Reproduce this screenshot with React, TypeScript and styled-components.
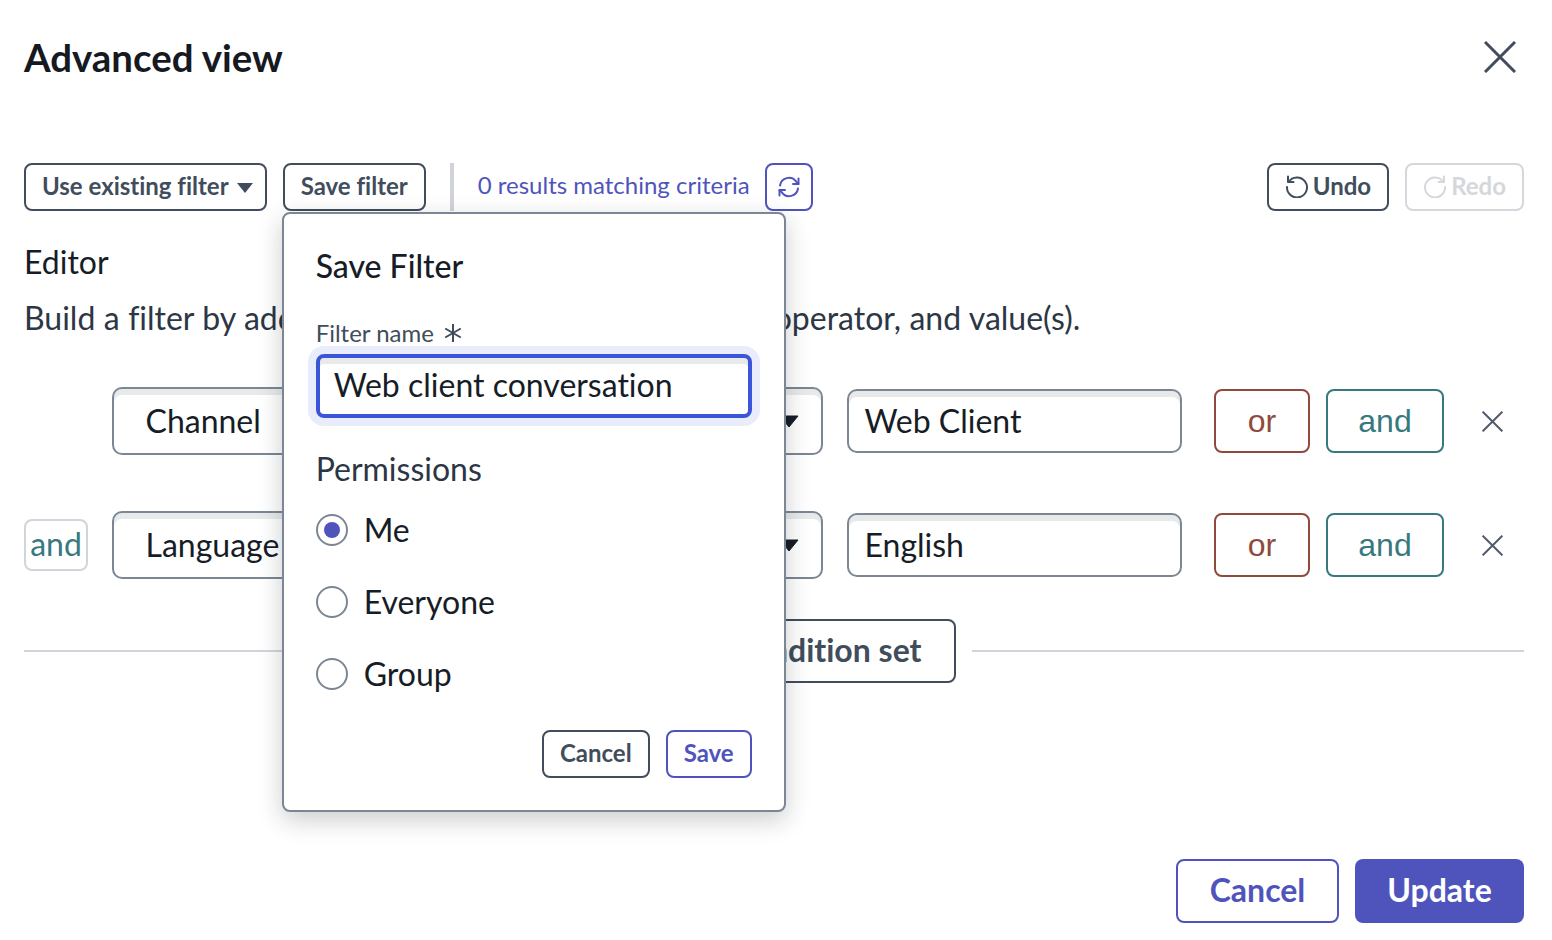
import React from "react";
import styled, { createGlobalStyle } from "styled-components";

const Global = createGlobalStyle`
  html, body { margin: 0; padding: 0; background: #fff; }
  body { font-family: Lato, "Liberation Sans", sans-serif; color: #161d26; font-variant-ligatures: none; }
  * { box-sizing: border-box; }
`;

const Page = styled.div`
  width: 1552px;
  height: 940px;
  overflow: hidden;
  padding: 0 28px 0 24px;
  background: #fff;
`;
const Header = styled.header`
  height: 163px;
  padding-top: 33px;
  display: flex;
  justify-content: space-between;
  align-items: flex-start;
`;
const Title = styled.h1`
  margin: 0;
  font-size: 38.4px;
  line-height: 48px;
  font-weight: 700;
  color: #16191f;
`;
const CloseBtn = styled.button`
  width: 48px; height: 48px; padding: 0;
  margin: 0;
  border: 0; background: none;
  display: flex; align-items: center; justify-content: center;
  color: #414d5c;
`;
const Toolbar = styled.div`
  display: flex;
  align-items: stretch;
  height: 48px;
`;
const Btn = styled.button<{ $tone?: "dark" | "indigo" | "muted" }>`
  height: 48px;
  padding: 0 16px 2px;
  border: 2px solid ${p => p.$tone === "indigo" ? "#4f54bd" : p.$tone === "muted" ? "#d5d7dc" : "#414d5c"};
  border-radius: 8px;
  background: #fff;
  color: ${p => p.$tone === "indigo" ? "#4f54bd" : p.$tone === "muted" ? "#d5d7dc" : "#414d5c"};
  font: 700 24px/28px Lato, sans-serif;
  font-variant-ligatures: none;
  display: inline-flex;
  align-items: center;
  justify-content: center;
  gap: 4px;
  white-space: nowrap;
`;
const Caret = styled.span`
  display: inline-block;
  margin: 3px -4px 0 4px;
  width: 0; height: 0;
  border-left: 8px solid transparent;
  border-right: 8px solid transparent;
  border-top: 10px solid #414d5c;
`;
const SaveWrap = styled.div`
  position: relative;
  margin-left: 16px;
`;
const Sep = styled.div`
  width: 4px;
  margin: 0 24px;
  background: #d1d3da;
`;
const Results = styled.span`
  align-self: center;
  width: 271px;
  white-space: nowrap;
  font-size: 24px;
  color: #4f54bd;
  margin: 0 16px 6px 0;
`;
const SquareBtn = styled(Btn)`
  width: 48px;
  padding: 0;
`;
const RightTools = styled.div`
  margin-left: auto;
  display: flex;
  gap: 16px;
`;
const SectionTitle = styled.div`
  margin-top: 31px;
  font-size: 32px;
  line-height: 40px;
  color: #161d26;
`;
const Desc = styled.p`
  margin: 16px 0 0;
  font-size: 32px;
  line-height: 40px;
  word-spacing: 0.25px;
  color: #2c3644;
  white-space: nowrap;
`;
const Rows = styled.div`
  margin-top: 49px;
  display: flex;
  flex-direction: column;
  gap: 56px;
`;
const Row = styled.div`
  display: grid;
  grid-template-columns: 64px 711px 335px 96px 118px 48px;
  align-items: center;
  height: 68px;
`;
const Chip = styled.span`
  height: 52px;
  width: 64px;
  border: 2px solid #d1d5db;
  border-radius: 8px;
  padding-bottom: 4px;
  display: flex;
  align-items: center;
  justify-content: center;
  font-size: 32px;
  color: #38787f;
`;
const Select = styled.div`
  grid-column: 2;
  margin-left: 24px;
  width: 711px;
  height: 68px;
  border: 2px solid #7b8794;
  border-radius: 10px;
  box-shadow: inset 0 6px 0 #e8eaea;
  padding: 0 22px 2px 31.5px;
  display: flex;
  align-items: center;
  justify-content: space-between;
  font-size: 32px;
  background: #fff;
`;
const SelectArrow = styled.svg`
  width: 20px;
  height: 13px;
  margin-top: 2px;
`;
const Value = styled.div`
  grid-column: 3;
  margin-left: 48px;
  width: 335px;
  height: 64px;
  border: 2px solid #7b8794;
  border-radius: 10px;
  box-shadow: inset 0 6px 0 #e8eaea;
  padding: 0 15.5px 2px;
  display: flex;
  align-items: center;
  font-size: 32px;
`;
const Logic = styled.button<{ $kind: "or" | "and" }>`
  height: 64px;
  border: 2px solid ${p => p.$kind === "or" ? "#8f4a3c" : "#38787f"};
  color: ${p => p.$kind === "or" ? "#8f4a3c" : "#38787f"};
  border-radius: 8px;
  background: #fff;
  font: 400 32px "Liberation Sans", Arial, sans-serif;
  padding: 0;
`;
const OrBtn = styled(Logic)`
  grid-column: 4;
  margin-left: 80px;
  width: 96px;
`;
const AndBtn = styled(Logic)`
  grid-column: 5;
  margin-left: 96px;
  width: 118px;
`;
const RemoveBtn = styled.button`
  grid-column: 6;
  margin-left: 120px;
  width: 48px; height: 48px;
  border: 0; padding: 0; background: none;
  display: flex; align-items: center; justify-content: center;
`;
const Adder = styled.div`
  margin-top: 40px;
  display: flex;
  align-items: center;
  gap: 16px;
`;
const Rule = styled.div`
  flex: 1;
  height: 2px;
  background: #d1d5db;
`;
const AddBtn = styled(Btn)`
  height: 64px;
  padding: 0 32px 2px;
  gap: 12px;
  font-size: 32px;
  width: 364px;
`;
const Footer = styled.footer`
  margin-top: 176px;
  display: flex;
  justify-content: flex-end;
  gap: 16px;
`;
const FootBtn = styled.button<{ $primary?: boolean }>`
  height: 64px;
  width: ${p => p.$primary ? "169px" : "163px"};
  padding: 0 0 3px;
  border: ${p => p.$primary ? "0" : "2px solid #4f54bd"};
  border-radius: 8px;
  background: ${p => p.$primary ? "#4f54bd" : "#fff"};
  color: ${p => p.$primary ? "#fff" : "#4f54bd"};
  font: 700 32px Lato, sans-serif;
`;
const Popover = styled.div`
  position: absolute;
  top: 49px;
  left: -1px;
  width: 504px;
  height: 600px;
  padding: 32px;
  background: #fff;
  border: 2px solid #7b8794;
  border-radius: 8px;
  box-shadow: 0 8px 24px rgba(22, 29, 38, 0.22);
  display: flex;
  flex-direction: column;
  z-index: 5;
`;
const PopTitle = styled.h2`
  margin: 0;
  font-size: 32px;
  line-height: 40px;
  font-weight: 500;
  color: #161d26;
`;
const FieldLabel = styled.label`
  margin-top: 32px;
  height: 28px;
  display: flex;
  align-items: center;
  gap: 9px;
  font-size: 24px;
  color: #414d5c;
`;
const TextInput = styled.div`
  margin-top: 8px;
  height: 64px;
  border: 4px solid #3b55d9;
  border-radius: 8px;
  box-shadow: 0 0 0 8px #e9ecfb, inset 0 6px 0 #e8eaea;
  padding: 0 14px 4px;
  display: flex;
  align-items: center;
  font-size: 32px;
  color: #161d26;
`;
const GroupLabel = styled.div`
  margin-top: 31px;
  font-size: 32px;
  line-height: 40px;
  color: #2c3644;
`;
const RadioList = styled.div`
  margin-top: 21px;
  display: flex;
  flex-direction: column;
  gap: 32px;
`;
const RadioRow = styled.div`
  height: 40px;
  display: flex;
  align-items: center;
  gap: 16px;
  font-size: 32px;
  color: #161d26;
`;
const RadioText = styled.span`
  margin-bottom: 2px;
`;
const RadioDot = styled.span<{ $on?: boolean }>`
  width: 32px;
  height: 32px;
  border-radius: 50%;
  border: 2px solid #7b8794;
  display: flex;
  align-items: center;
  justify-content: center;
  &::after {
    content: "";
    width: 16px;
    height: 16px;
    border-radius: 50%;
    background: ${p => p.$on ? "#4f54bd" : "transparent"};
  }
`;
const PopActions = styled.div`
  margin-top: 36px;
  display: flex;
  justify-content: flex-end;
  gap: 16px;
`;
const StarSvg = styled.svg`
  margin-top: 2px;
`;

const XIcon = ({ size, stroke, color }: { size: number; stroke: number; color: string }) => (
  <svg width={size} height={size} viewBox="0 0 32 32" fill="none" stroke={color} strokeWidth={stroke}>
    <path d="M1 1 L31 31 M31 1 L1 31" />
  </svg>
);
const PlusIcon = () => (
  <svg width="32" height="32" viewBox="0 0 32 32" fill="none" stroke="#414d5c" strokeWidth="3">
    <path d="M16 5V27M5 16H27" />
  </svg>
);
const SyncIcon = () => (
  <svg width="24" height="24" viewBox="0 0 24 24" fill="none" stroke="#4f54bd" strokeWidth="2" strokeLinecap="round" strokeLinejoin="round">
    <path d="M3 10.5A9 9 0 0 1 19.2 6.6L21.5 9" />
    <path d="M21.5 3.5V9H16" />
    <path d="M21 13.5A9 9 0 0 1 4.8 17.4L2.5 15" />
    <path d="M2.5 20.5V15H8" />
  </svg>
);
const TurnIcon = ({ color, flip }: { color: string; flip?: boolean }) => (
  <svg width="24" height="24" viewBox="0 0 24 24" fill="none" stroke={color} strokeWidth="2" strokeLinecap="round" strokeLinejoin="round" transform={flip ? "scale(-1 1)" : undefined}>
    <path d="M3.6 8A10 10 0 1 1 2 13" />
    <path d="M3 2.5V8H8.5" />
  </svg>
);
const Star = () => (
  <StarSvg width="20" height="20" viewBox="0 0 20 20" fill="none" stroke="#414d5c" strokeWidth="2">
    <path d="M10 1V19M2.2 5.5L17.8 14.5M17.8 5.5L2.2 14.5" />
  </StarSvg>
);
const Arrow = () => (
  <SelectArrow viewBox="0 0 20 13">
    <path d="M1 1H19L10 12Z" fill="#161d26" stroke="#161d26" strokeLinejoin="round" />
  </SelectArrow>
);

const ConditionRow = ({ chip, field, value }: { chip?: string; field: string; value: string }) => (
  <Row>
    {chip ? <Chip>{chip}</Chip> : null}
    <Select>
      <span>{field}</span>
      <Arrow />
    </Select>
    <Value>{value}</Value>
    <OrBtn $kind="or">or</OrBtn>
    <AndBtn $kind="and">and</AndBtn>
    <RemoveBtn aria-label="Remove"><XIcon size={21} stroke={3} color="#535b6b" /></RemoveBtn>
  </Row>
);

export default function App() {
  return (
    <Page>
      <Global />
      <Header>
        <Title>Advanced view</Title>
        <CloseBtn aria-label="Close"><XIcon size={32} stroke={3} color="#414d5c" /></CloseBtn>
      </Header>
      <Toolbar>
        <Btn>Use existing filter <Caret /></Btn>
        <SaveWrap>
          <Btn>Save filter</Btn>
          <Popover>
            <PopTitle>Save Filter</PopTitle>
            <FieldLabel>Filter name <Star /></FieldLabel>
            <TextInput>Web client conversation</TextInput>
            <GroupLabel>Permissions</GroupLabel>
            <RadioList>
              <RadioRow><RadioDot $on /><RadioText>Me</RadioText></RadioRow>
              <RadioRow><RadioDot /><RadioText>Everyone</RadioText></RadioRow>
              <RadioRow><RadioDot /><RadioText>Group</RadioText></RadioRow>
            </RadioList>
            <PopActions>
              <Btn>Cancel</Btn>
              <Btn $tone="indigo">Save</Btn>
            </PopActions>
          </Popover>
        </SaveWrap>
        <Sep />
        <Results>0 results matching criteria</Results>
        <SquareBtn $tone="indigo" aria-label="Refresh"><SyncIcon /></SquareBtn>
        <RightTools>
          <Btn><TurnIcon color="#414d5c" />Undo</Btn>
          <Btn $tone="muted"><TurnIcon color="#d5d7dc" flip />Redo</Btn>
        </RightTools>
      </Toolbar>
      <SectionTitle>Editor</SectionTitle>
      <Desc>Build a filter by adding conditions. A criteria is a field, operator, and value(s).</Desc>
      <Rows>
        <ConditionRow field="Channel" value="Web Client" />
        <ConditionRow chip="and" field="Language" value="English" />
      </Rows>
      <Adder>
        <Rule />
        <AddBtn><PlusIcon />Add condition set</AddBtn>
        <Rule />
      </Adder>
      <Footer>
        <FootBtn>Cancel</FootBtn>
        <FootBtn $primary>Update</FootBtn>
      </Footer>
    </Page>
  );
}
